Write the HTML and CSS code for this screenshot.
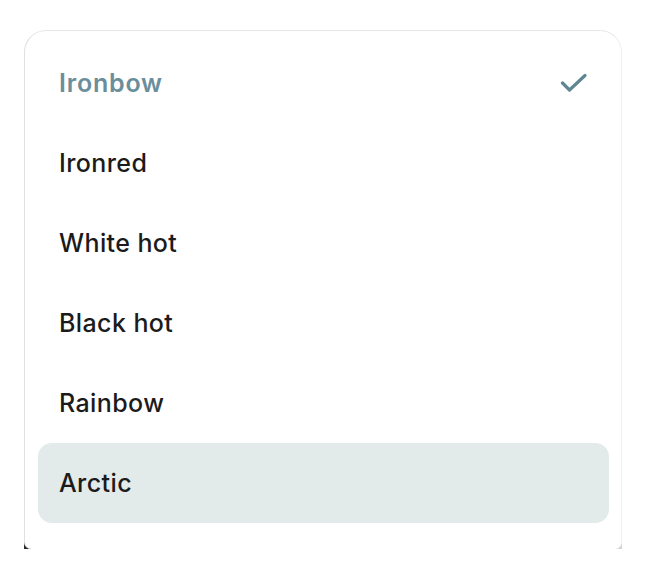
FILE: index.html
```html
<!DOCTYPE html>
<html lang="en">
<head>
<meta charset="utf-8">
<title>Palette</title>
<link rel="stylesheet" href="styles.css">
</head>
<body>
<div class="frame">
  <ul class="menu">
    <li class="item selected">
      <span class="label">Ironbow</span>
      <svg class="check" width="28" height="28" viewBox="0 0 28 28" aria-hidden="true">
        <path d="M3.5 13 L10.5 20 L26 5.5" fill="none" stroke="currentColor" stroke-width="3.2" stroke-linecap="round" stroke-linejoin="round"/>
      </svg>
    </li>
    <li class="item"><span class="label">Ironred</span></li>
    <li class="item"><span class="label">White hot</span></li>
    <li class="item"><span class="label">Black hot</span></li>
    <li class="item"><span class="label">Rainbow</span></li>
    <li class="item hovered"><span class="label">Arctic</span></li>
  </ul>
</div>
</body>
</html>
```

FILE: styles.css
```css
html, body {
  margin: 0;
  padding: 0;
  background: #ffffff;
}

body {
  font-family: Inter, "Liberation Sans", sans-serif;
  color: #1b1b1b;
}

.frame {
  margin: 30px 0 0 24px;
  width: 598px;
  height: 519px;
  background:
    linear-gradient(to right, #2a2a2a 0 8px, transparent 8px calc(100% - 8px), #d4d4d4 calc(100% - 8px)) left bottom / 100% 8px no-repeat;
}

.menu {
  list-style: none;
  margin: 0;
  box-sizing: border-box;
  height: 519px;
  padding: 12px 12px 26px 13px;
  background: #ffffff;
  border-top: 1px solid #ebe6e6;
  border-left: 1px solid #e2dfdf;
  border-right: 1px solid #f3efef;
  border-top-right-radius: 22px;
  border-top-left-radius: 22px;
  border-bottom-left-radius: 7px;
  border-bottom-right-radius: 7px;
}

.item {
  height: 80px;
  display: flex;
  align-items: center;
  justify-content: space-between;
  padding: 0 22px 0 21px;
  border-radius: 14px;
  font-size: 25px;
  font-weight: 500;
  letter-spacing: 0.4px;
}

.label {
  line-height: 1;
  margin-top: 1px;
}

.selected {
  color: #6a8e9b;
  font-weight: 600;
  letter-spacing: 0.8px;
}

.check {
  color: #5f8692;
  display: block;
  margin-top: 2px;
}

.hovered {
  background: #e3eaea;
}
```
